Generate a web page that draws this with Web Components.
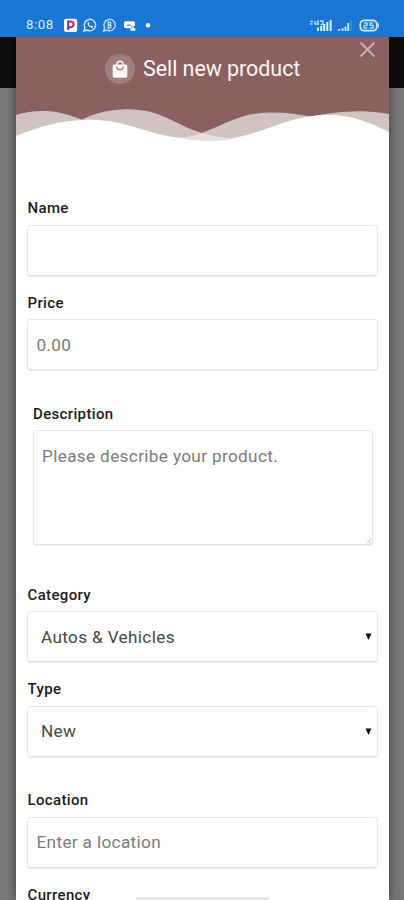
<!DOCTYPE html>
<html lang="en">
<head>
<meta charset="utf-8">
<title>Sell new product</title>
<style>
html,body{margin:0;height:900px;overflow:hidden}
body{font-family:Roboto,"Liberation Sans",sans-serif;background:#777}
</style>
</head>
<body>
<sell-app></sell-app>
<script>
const define = (name, html) => customElements.define(name, class extends HTMLElement {
  constructor() {
    super();
    const t = document.createElement('template');
    t.innerHTML = html;
    this.attachShadow({mode: 'open'}).append(t.content.cloneNode(true));
  }
});

define('status-bar', `
<style>
:host{display:flex;height:37px;box-sizing:border-box;padding:13px 24px 0 26px;background:#1976d5;color:#d8ebff;align-items:center;justify-content:space-between;position:relative;z-index:1}
div{display:flex;align-items:center}
.time{font-size:13.300px;line-height:24px;letter-spacing:.5px;width:37px}
svg{display:block}
</style>
<div><span class="time">8:08</span>
<svg width="94" height="24" viewBox="63 13 94 24" fill="none">
<rect x="64" y="18.7" width="13.2" height="13.2" rx="2.2" fill="#fff"/>
<path d="M68.2 30V21.6h2.6a2.8 2.8 0 0 1 0 5.6h-2.4" stroke="#7a2ca8" stroke-width="2"/>
<path d="M70 21.6h1a2.8 2.8 0 0 1 2.5 3" stroke="#f03857" stroke-width="1.8"/>
<path d="M84 31l.9-3.2a5.7 5.7 0 1 1 2.2 2.2z" stroke="#cce3fb" stroke-width="1.5"/>
<path d="M87.7 22.7c-.9 2.1 2.3 5.3 4.9 5l.5-1.4-1.6-.9-.8.8c-.9-.3-1.4-.9-1.8-1.8l.7-.8-.7-1.5z" fill="#e3f1ff"/>
<path d="M103.7 31l.9-3.2a5.7 5.7 0 1 1 2.2 2.2z" stroke="#b7d8f8" stroke-width="1.5"/>
<path d="M108.2 21.8v6.8M108.2 22h1a1.5 1.5 0 0 1 0 3h-1m0 0h1.3a1.5 1.5 0 0 1 0 3h-1.3" stroke="#c7e1fb" stroke-width="1.3"/>
<path d="M126 21.3h7.200a1.800 1.800 0 0 1 1.800 1.800v2.900h-1.800a2.200 2.200 0 0 0-2.200 2.200h-5.200a1.800 1.800 0 0 1-1.800-1.800V23.300a2 2 0 0 1 2-2z" fill="#fff"/>
<path d="M126.700 25.200h4" stroke="#1976d5"/><path d="M130.500 30.800v-2.600h1.500v-1.400h1.800v1.400h1.500v2.600z" fill="#fff"/>
<circle cx="148" cy="25.200" r="2.300" fill="#fff"/>
</svg></div>
<svg width="72" height="24" viewBox="308 13 72 24" fill="none">
<path d="M310 21.500h3M310 24h2.500M315 21v3h3.500M318 20v5M320 21h3v3.500h-2.500" stroke="#b9d9fa" stroke-width="1.500"/>
<path d="M318 31v-3.500M321.200 31v-5M324.200 31v-7M327.300 31v-9M330.600 31V20" stroke="#dceeff" stroke-width="2"/>
<path d="M339.200 31v-2M342.500 31v-3M345.500 31v-4.500M348.200 31v-8" stroke="#c0defa" stroke-width="2"/>
<path d="M351.300 31V20" stroke="#3d8fdd" stroke-width="1.500"/>
<rect x="360.300" y="20.300" width="16.500" height="10.400" rx="4" stroke="#d6eaff" stroke-width="1.800"/>
<path d="M378.300 23.300v4.200" stroke="#d6eaff" stroke-width="1.200"/>
<path d="M364 23h3v2.500h-3V28h3.500M373 23h-3v2.300h3V28h-3.500" stroke="#a9d2fa" stroke-width="1.500"/>
</svg>`);

define('modal-header', `
<style>
:host{display:grid;position:relative;height:105px;background:#8b6060;color:#fff5f0}
.wave{grid-area:1/1;display:block}
.title{grid-area:1/1;display:flex;align-items:center;gap:8px;height:30px;margin:17px 0 0 89px;font-size:21.500px;white-space:nowrap;z-index:1}
.title span{letter-spacing:-.07px;position:relative;top:-1px}
.close{position:absolute;right:13px;top:4px}
</style>
<svg class="wave" width="373" height="105" viewBox="16 37 373 105">
<path d="M16 142V115C31 110.500 47 110 61 113C69 114.500 76 118 82 119.500C100 111 124 106 151 112C170 117 183 128 202 133C223 125 239 115 261 113C279 111.500 295 113.500 310 116.500C330 113 360 108 389 114V142Z" fill="#d2c3c3"/>
<path d="M16 142V136C40 126 60 121 84 120C125 118 147 136 183 138C194 139 206 139 219 139C258 139 283 115 329 115C353 115 371 123 389 132V142Z" fill="#fff"/>
<path d="M180 138C189 137 196 135 202 133C212 136 224 138 236 138C222 142 198 142 180 138Z" fill="#e8dfdf"/>
</svg>
<div class="title">
<svg width="30" height="30" viewBox="0 0 30 30"><circle cx="15" cy="15" r="15" fill="#a17e7d"/><path d="M9 10.400h2.200a3.800 3.800 0 0 1 7.600 0H21q1.300 0 1.300 1.300v10q0 2-2 2H9.700q-2 0-2-2v-10Q7.700 10.400 9 10.400z" fill="#fff8f4"/><path d="M12.600 10.400a2.400 2.400 0 0 1 4.800 0z" fill="#a17e7d"/><path d="M11.800 12.500a3.200 3.200 0 0 0 6.400 0" fill="none" stroke="#a17e7d" stroke-width="1.400"/></svg>
<span>Sell new product</span></div>
<svg class="close" width="17" height="17" viewBox="0 0 17 17"><path d="M1.500 1.500l14 14m0-14l-14 14" stroke="#c9b0af" stroke-width="1.900"/></svg>`);

define('form-field', `
<style>
:host{display:flex;flex-direction:column;gap:8px;height:75.500px}
.label{height:16.500px;line-height:16.500px;font-size:15px;font-weight:500;letter-spacing:.35px;color:#1c1c1c;padding-left:.5px}
.box{position:relative;flex:1;box-sizing:border-box;display:flex;align-items:center;justify-content:space-between;border:1px solid #e8e8e8;border-bottom-color:#dfdfdf;border-radius:4px;box-shadow:0 1px 1.500px rgba(0,0,0,.08);padding:0 5px 0 8.500px;font-size:17.200px;letter-spacing:.34px;color:#7b7b7b;background:#fff}
svg{display:none}
:host([kind=select]) .box{padding-left:13px;color:#484848}
:host([kind=select]) .arrow{display:block}
:host([kind=area]){height:139.500px;margin:0 5px 0 6px}
:host([kind=area]) .label{padding-left:0}
:host([kind=area]) .box{align-items:flex-start;padding:15px 5px 0 8px;line-height:20px}
:host([kind=area]) .arrow{display:none}
:host([kind=area]) .grip{display:block;position:absolute;right:1px;bottom:1px}
</style>
<div class="label"><slot name="label"></slot></div>
<div class="box"><slot></slot>
<svg class="arrow" width="7" height="7" viewBox="0 0 7 7"><path d="M.5.500h6L3.500 7z" fill="#111"/></svg>
<svg class="grip" width="4" height="4" viewBox="0 0 4 4"><path d="M0 4L4 0M2.500 4L4 2.500" stroke="#aaa" stroke-width=".8"/></svg>
</div>`);

define('field-group', `
<style>:host{display:flex;flex-direction:column;gap:19px}</style><slot></slot>`);

define('sell-app', `
<style>
:host{display:flex;flex-direction:column;height:900px;position:relative;overflow:hidden}
main{flex:1;min-height:0;padding:0 15px 0 16px;background:linear-gradient(#0d0f0e 51px,#777 51px)}
.modal{height:863px;background:#fff;box-shadow:0 0 9px rgba(0,0,0,.5);overflow:hidden}
form{display:flex;flex-direction:column;gap:35.500px;padding:58px 11px 0}
.pill{position:absolute;left:136px;bottom:0;width:134px;height:3px;border-radius:2px 2px 0 0;background:#e6e6e6}
</style>
<status-bar></status-bar>
<main><div class="modal"><modal-header></modal-header>
<form>
<field-group>
<form-field><span slot="label">Name</span></form-field>
<form-field><span slot="label">Price</span><span>0.00</span></form-field>
</field-group>
<form-field kind="area"><span slot="label">Description</span><span>Please describe your product.</span></form-field>
<field-group style="margin-top:6px">
<form-field kind="select"><span slot="label">Category</span><span>Autos &amp; Vehicles</span></form-field>
<form-field kind="select"><span slot="label">Type</span><span>New</span></form-field>
</field-group>
<field-group>
<form-field><span slot="label">Location</span><span>Enter a location</span></form-field>
<form-field><span slot="label">Currency</span></form-field>
</field-group>
</form></div></main>
<div class="pill"></div>`);
</script>
</body>
</html>
